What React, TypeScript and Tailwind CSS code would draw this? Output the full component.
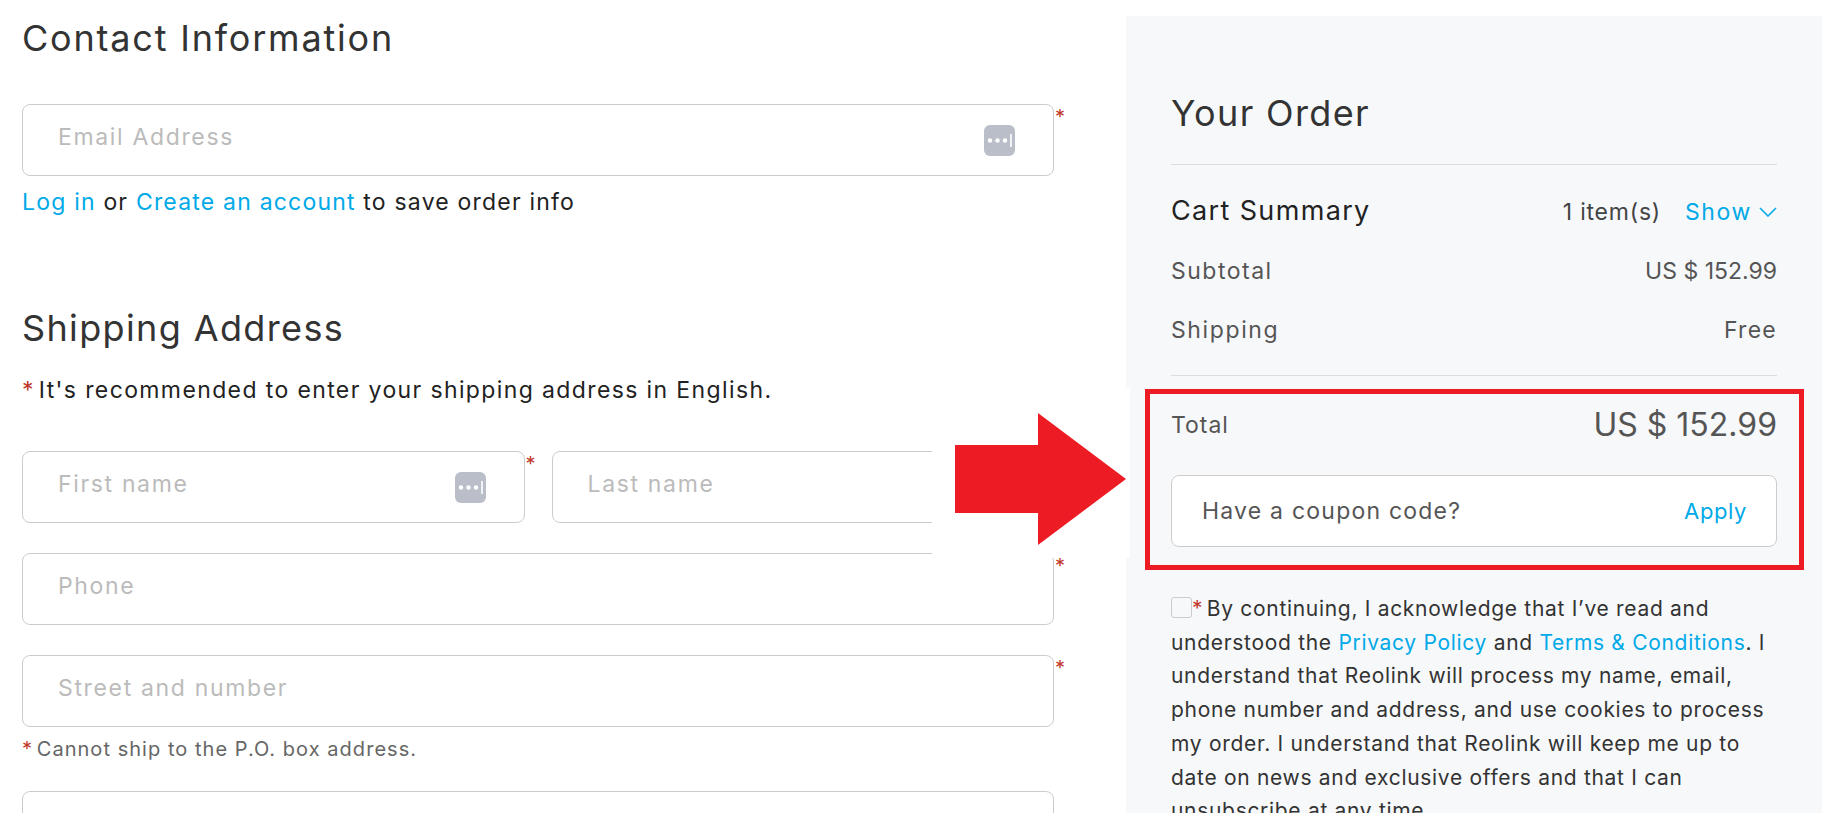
import React from "react";

const AutofillIcon: React.FC = () => {
  return (
    <svg width="31" height="31" viewBox="0 0 31 31" className="shrink-0">
      <rect width="31" height="31" rx="6" fill="#b9bec9" />
      <circle cx="6" cy="15.5" r="2.2" fill="#fff" />
      <circle cx="13.5" cy="15.5" r="2.2" fill="#fff" />
      <circle cx="21" cy="15.5" r="2.2" fill="#fff" />
      <rect x="26.2" y="9" width="1.6" height="13" fill="#fff" />
    </svg>
  );
};

type FieldProps = {
  label: string;
  required?: boolean;
  autofill?: boolean;
};

const Field: React.FC<FieldProps> = ({ label, required, autofill }) => {
  return (
    <div className="relative flex h-[72px] w-full items-center justify-between rounded-[8px] border border-[#ccc] bg-white pl-[35px] pr-[38px]">
      <span className="-mt-[6px] text-[23px] leading-[30px] tracking-[0.072em] text-[#bbb]">{label}</span>
      {autofill && <AutofillIcon />}
      {required && (
        <span className="absolute left-[calc(100%+2px)] top-[-3px] text-[20px] leading-[30px] text-[#c0392b]">*</span>
      )}
    </div>
  );
};

const Link: React.FC<{ children: React.ReactNode }> = ({ children }) => {
  return <a className="text-[#00a9e8]">{children}</a>;
};

const App: React.FC = () => {
  return (
    <div className="relative flex h-screen overflow-hidden bg-white font-['Inter','Liberation_Sans',sans-serif] text-[#333]">
      {/* left column */}
      <div className="ml-[22px] w-[1032px] shrink-0 pt-[16px]">
        <h1 className="text-[36px] leading-[44px] tracking-[0.05em] text-[#333]">Contact Information</h1>
        <div className="mt-[44px]">
          <Field label="Email Address" required autofill />
        </div>
        <p className="mt-[11px] text-[23px] leading-[30px] tracking-[0.052em] text-[#222]">
          <Link>Log in</Link> or <Link>Create an account</Link> to save order info
        </p>

        <h2 className="mt-[89px] text-[36px] leading-[44px] tracking-[0.038em] text-[#333]">Shipping Address</h2>
        <p className="mt-[25px] text-[23px] leading-[30px] tracking-[0.06em] text-[#222]">
          <span className="mr-[-4px] text-[#c0392b]">*</span> It's recommended to enter your shipping address in English.
        </p>

        <div className="mt-[46px] flex gap-[27px]">
          <Field label="First name" required autofill />
          <Field label="Last name" required />
        </div>
        <div className="mt-[30px]">
          <Field label="Phone" required />
        </div>
        <div className="mt-[30px]">
          <Field label="Street and number" required />
        </div>
        <p className="mt-[10px] text-[20px] leading-[24px] tracking-[0.052em] text-[#666]">
          <span className="mr-[-3px] text-[#c0392b]">*</span> Cannot ship to the P.O. box address.
        </p>
        <div className="mt-[30px]">
          <Field label="" />
        </div>
      </div>

      {/* order panel */}
      <div className="ml-[72px] mt-[16px] w-[696px] shrink-0 bg-[#f7f8fa] px-[45px] pt-[75px]">
        <h2 className="text-[36px] leading-[44px] tracking-[0.038em] text-[#333]">Your Order</h2>
        <div className="mt-[29px] border-t border-[#ddd]" />

        <div className="mt-[31px] flex h-[30px] items-center justify-between leading-[30px]">
          <span className="text-[27px] tracking-[0.05em] text-[#222]">Cart Summary</span>
          <div className="mt-[2px] flex items-center">
            <span className="text-[23px] tracking-[0.034em] text-[#444]">1 item(s)</span>
            <span className="ml-[24px] text-[23px] tracking-[0.07em] text-[#00a9e8]">Show</span>
            <svg width="18" height="10" viewBox="0 0 18 10" fill="none" className="ml-[7px]">
              <path d="M1 1l8 8 8-8" stroke="#00a9e8" strokeWidth="1.6" />
            </svg>
          </div>
        </div>
        <div className="mt-[30px] flex justify-between text-[23px] leading-[30px] text-[#555]">
          <span className="tracking-[0.065em]">Subtotal</span>
          <span>US $ 152.99</span>
        </div>
        <div className="mt-[29px] flex justify-between text-[23px] leading-[30px] text-[#555]">
          <span className="tracking-[0.07em]">Shipping</span>
          <span className="tracking-[0.055em]">Free</span>
        </div>
        <div className="mt-[30px] border-t border-[#ddd]" />

        {/* highlighted total */}
        <div className="-ml-[26px] -mr-[27px] mt-[13px] border-[5px] border-[#ed1c24] pb-[18px] pl-[21px] pr-[22px] pt-[11px]">
          <div className="flex h-[40px] items-center justify-between text-[#555]">
            <span className="text-[23px] tracking-[0.043em]">Total</span>
            <span className="text-[32px]">US $ 152.99</span>
          </div>
          <div className="mt-[30px] flex h-[72px] items-center justify-between rounded-[8px] border border-[#ccc] bg-white pl-[30px] pr-[29px]">
            <span className="mt-[1px] text-[23px] tracking-[0.053em] text-[#555]">Have a coupon code?</span>
            <span className="text-[22px] tracking-[0.027em] text-[#00a9e8]">Apply</span>
          </div>
        </div>

        <p className="mt-[22px] text-[21px] leading-[33.7px] tracking-[0.033em] text-[#333]">
          <span className="inline-block h-[21px] w-[21px] rounded-[3px] border border-[#ccc] align-[-2px]" />
          <span className="mr-[-3px] text-[#c0392b]">*</span> By continuing, I acknowledge that I’ve read and
          <br />
          understood the <Link>Privacy Policy</Link> and <Link>Terms &amp; Conditions</Link>. I
          <br />
          understand that Reolink will process my name, email,
          <br />
          phone number and address, and use cookies to process
          <br />
          my order. I understand that Reolink will keep me up to
          <br />
          date on news and exclusive offers and that I can
          <br />
          unsubscribe at any time.
        </p>
      </div>

      {/* white patch and arrow pasted over the page */}
      <div className="absolute left-[932px] top-[388px] h-[170px] w-[198px] bg-white" />
      <svg width="172" height="134" viewBox="0 0 172 134" className="absolute left-[955px] top-[412px]">
        <path d="M0 33H83V1L171 67L83 133V101H0Z" fill="#ed1c24" />
      </svg>
    </div>
  );
};

export default App;
